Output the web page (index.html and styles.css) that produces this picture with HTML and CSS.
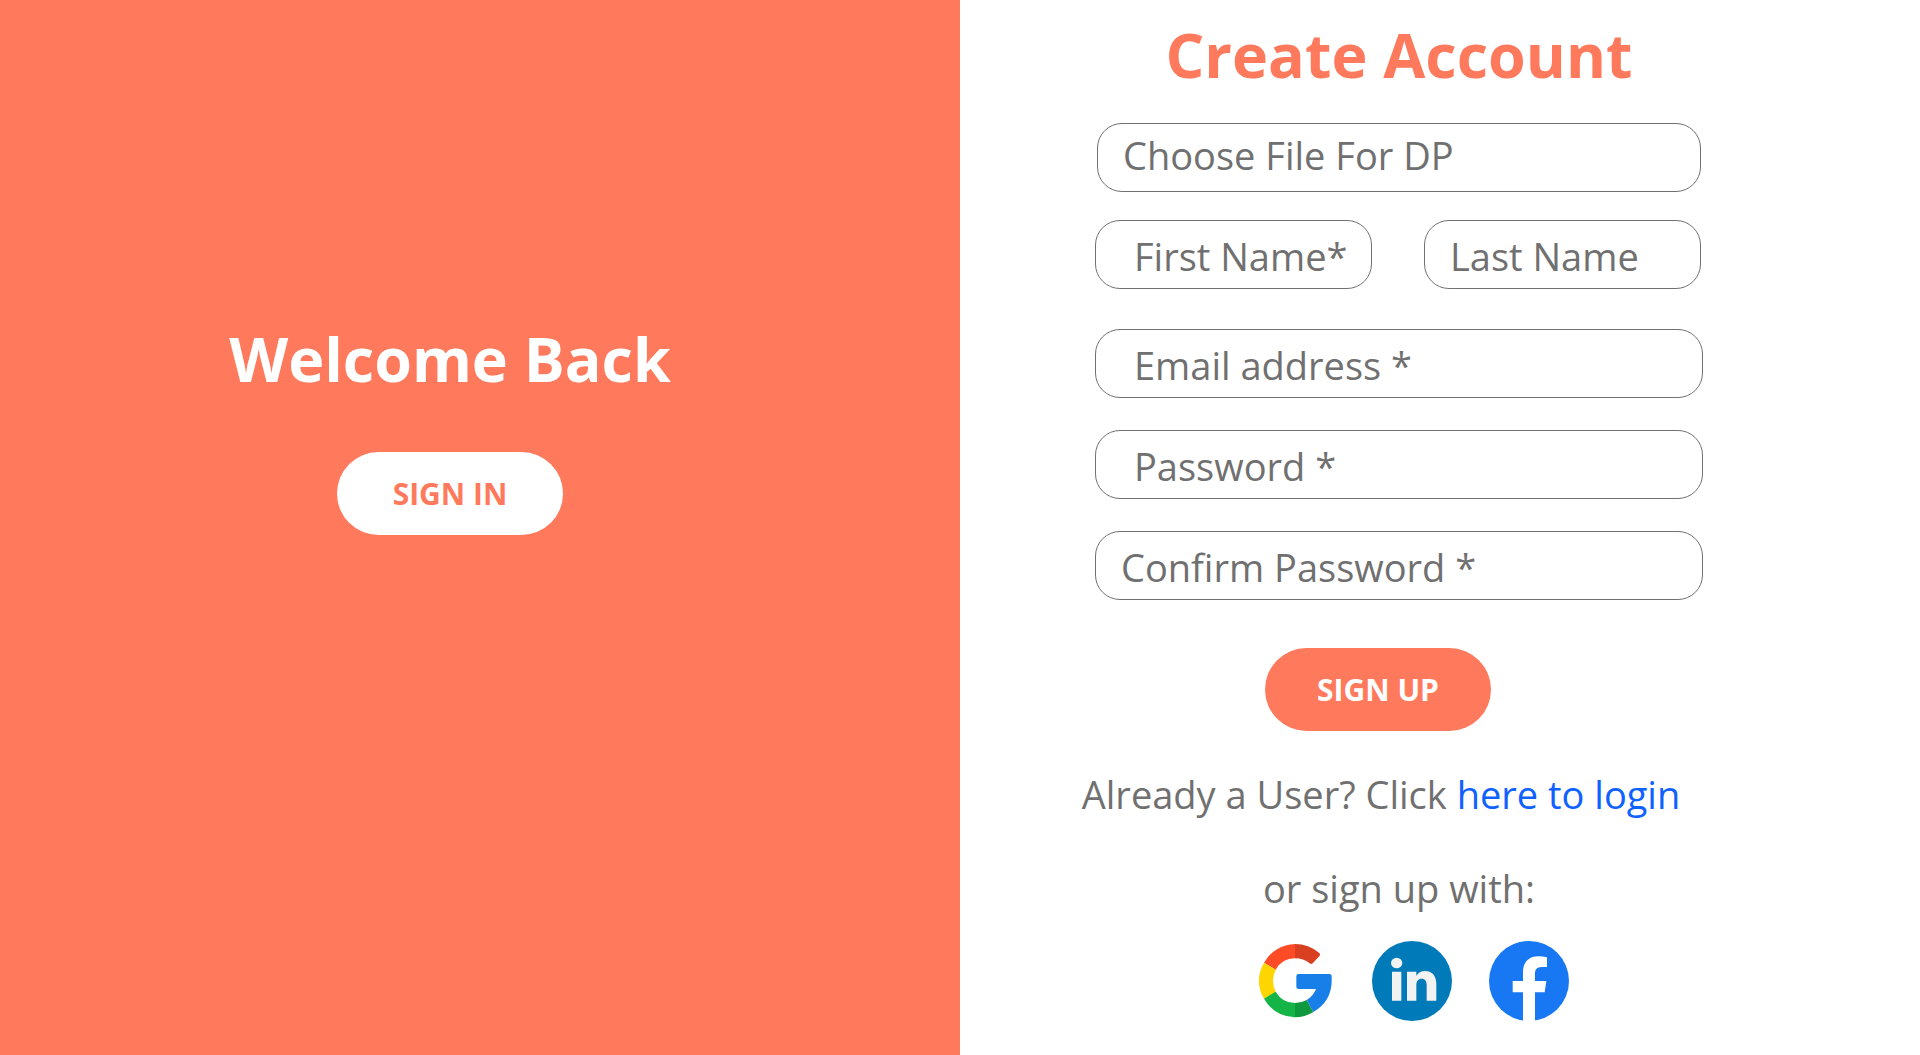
FILE: index.html
```html
<!DOCTYPE html>
<html lang="en">
<head>
<meta charset="utf-8">
<meta name="viewport" content="width=device-width, initial-scale=1">
<title>Create Account</title>
<link rel="stylesheet" href="styles.css">
</head>
<body>
<main class="page">
  <section class="welcome">
    <h2 class="title">Welcome Back</h2>
    <button class="pill pill-light" type="button">SIGN IN</button>
  </section>
  <section class="signup">
    <form class="form">
      <h1 class="title title-accent">Create Account</h1>
      <div class="file-row">
        <label class="field file-field">Choose File For DP<input class="file-input" type="file"></label>
      </div>
      <div class="names">
        <input class="field field-indent" type="text" aria-label="First Name" placeholder="First Name*">
        <input class="field" type="text" aria-label="Last Name" placeholder="Last Name">
      </div>
      <div class="stack">
        <input class="field field-indent" type="email" aria-label="Email address" placeholder="Email address *">
        <input class="field field-indent" type="password" aria-label="Password" placeholder="Password *">
        <input class="field" type="password" aria-label="Confirm Password" placeholder="Confirm Password *">
      </div>
      <button class="pill pill-accent" type="submit">SIGN UP</button>
      <p class="note note-login">Already a User? Click <a class="link" href="#login">here to login</a></p>
      <p class="note note-social">or sign up with:</p>
      <div class="socials">
        <a class="social" href="#google" aria-label="Google">
          <svg viewBox="45 63 240 240" width="80" height="80" aria-hidden="true">
            <path fill="#ff4b26" d="M72 128A110 110 0 0 1 165 72V115A67 67 0 0 0 107 149Z"/>
            <path fill="#d93f21" d="M165 72Q206 72 238 99Q242 103 239 107L218 130Q214 134 209 130Q190 115 165 115Z"/>
            <path fill="#ffd500" d="M72 128L107 149Q91 182 107 216L72 237Q41 182 72 128Z"/>
            <path fill="#14b447" d="M72 236L107 215Q126 248 165 249V292Q103 290 72 236Z"/>
            <path fill="#0f993e" d="M165 249Q184 249 200 240L220 276Q195 292 165 292Z"/>
            <path fill="#187fe9" d="M176 162H268Q275 162 275 169V182Q275 243 220 276L200 240Q220 228 228 207H176Q169 207 169 200V169Q169 162 176 162Z"/>
          </svg>
        </a>
        <a class="social" href="#linkedin" aria-label="LinkedIn">
          <svg viewBox="396 63 240 240" width="80" height="80" aria-hidden="true">
            <circle cx="516" cy="183" r="120" fill="#007ab9"/>
            <g fill="#f1f2f2">
              <ellipse cx="470" cy="129" rx="17" ry="16"/>
              <path d="M456 155H484V242H456ZM501 155H529V167C535 158 543 153 555 153C576 153 589 167 589 192V242H560V195C560 183 555 176 545 176C535 176 529 183 529 195V242H501Z"/>
            </g>
          </svg>
        </a>
        <a class="social" href="#facebook" aria-label="Facebook">
          <svg viewBox="747 63 240 240" width="80" height="80" aria-hidden="true">
            <circle cx="867" cy="183" r="120" fill="#1877f2"/>
            <path fill="#fff" d="M849 304V217H818V183H849V156C849 126 867 109 895 109Q908 109 921 112V141H905C890 141 885 150 885 160V183H919L914 217H885V304Z"/>
          </svg>
        </a>
      </div>
    </form>
  </section>
</main>
</body>
</html>
```
FILE: styles.css
```css
* {
  box-sizing: border-box;
}

body {
  margin: 0;
  font-family: "Segoe UI", "Open Sans", "Noto Sans", sans-serif;
  color: #707070;
  background: #fff;
}

.page {
  display: grid;
  grid-template-columns: 1fr 1fr;
  min-height: 100vh;
}

.welcome {
  display: flex;
  flex-direction: column;
  align-items: center;
  gap: 52px;
  padding: 318px 60px 40px 0;
  background: #ff7a5c;
  color: #fff;
}

.title {
  margin: 0;
  font-size: 61px;
  line-height: 82px;
  font-weight: 700;
  white-space: nowrap;
}

.title-accent {
  color: #ff7a5c;
  margin-bottom: 27px;
}

.pill {
  width: 226px;
  height: 83px;
  border: 0;
  border-radius: 42px;
  font: 700 30px/40px "Segoe UI", "Open Sans", "Noto Sans", sans-serif;
  cursor: pointer;
}

.pill-light {
  background: #fff;
  color: #ff7a5c;
}

.pill-accent {
  margin: 48px 42px 0 0;
  background: #ff7a5c;
  color: #fff;
}

.signup {
  display: flex;
  justify-content: center;
  padding: 14px 82px 32px 0;
}

.form {
  display: flex;
  flex-direction: column;
  align-items: center;
  width: 100%;
  max-width: 608px;
}

.field {
  display: block;
  width: 100%;
  min-width: 0;
  height: 69px;
  padding: 3px 25px 0;
  border: 1px solid #707070;
  border-radius: 25px;
  background: #fff;
  color: #707070;
  font: 400 38px/56px "Segoe UI", "Open Sans", "Noto Sans", sans-serif;
}

.field::placeholder {
  color: #707070;
  opacity: 1;
}

.field-indent {
  padding-left: 38px;
  padding-right: 10px;
}

.file-row {
  width: 100%;
  padding: 0 2px;
}

.file-field {
  padding-top: 0;
  line-height: 62px;
  cursor: pointer;
}

.file-input {
  position: absolute;
  width: 1px;
  height: 1px;
  opacity: 0;
}

.names {
  display: grid;
  grid-template-columns: 1fr 1fr;
  gap: 52px;
  width: 100%;
  margin-top: 28px;
  padding-right: 2px;
}

.stack {
  display: grid;
  gap: 32px;
  width: 100%;
  margin-top: 40px;
}

.note {
  margin: 0;
  font-size: 38px;
  line-height: 54px;
  white-space: nowrap;
}

.note-login {
  margin-top: 36px;
  margin-right: 36px;
}

.note-social {
  margin-top: 40px;
}

.link {
  color: #0f62fe;
  text-decoration: none;
}

.socials {
  display: flex;
  gap: 37px;
  margin-top: 26px;
  padding-left: 26px;
}

.social,
.social svg {
  display: block;
}
```
